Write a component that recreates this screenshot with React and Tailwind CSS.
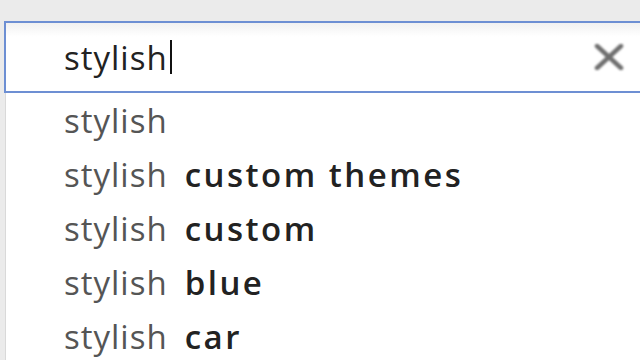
import React from "react";

const suggestions = [
  { base: "stylish", extra: "" },
  { base: "stylish", extra: "custom themes" },
  { base: "stylish", extra: "custom" },
  { base: "stylish", extra: "blue" },
  { base: "stylish", extra: "car" },
];

const App = () => {
  return (
    <div className="w-[640px] h-[360px] overflow-hidden bg-[#ebebeb] font-['Open_Sans',sans-serif]">
      <div className="h-[21px]" />

      {/* omnibox input */}
      <div className="ml-[4px] w-[660px] h-[72px] border-2 border-[#6d8fd3] bg-white bg-gradient-to-b from-[#f1f1f1] to-white to-[20%] flex items-center">
        <div className="pl-[58px] flex items-center text-[33px] tracking-[1px] text-[#222] leading-none">
          <span>stylish</span>
          <span className="ml-[2px] w-[2px] h-[34px] bg-[#111]" />
        </div>
        <div className="ml-auto mr-[38px] flex items-center">
          <svg width="30" height="26" viewBox="0 0 30 26" className="blur-[0.8px]">
            <path d="M3 2 L27 24 M27 2 L3 24" stroke="#6e6e6e" strokeWidth="4.5" strokeLinecap="round" />
          </svg>
        </div>
      </div>

      {/* suggestion dropdown */}
      <div className="h-[270px] ml-[5px] bg-white border-l border-[#d9d9d9] flex flex-col">
        {suggestions.map((s, i) => (
          <div key={i} className="h-[54px] shrink-0 pl-[58px] flex items-center text-[33px] leading-none whitespace-nowrap">
            <span className="text-[#555] tracking-[1px]">{s.base}</span>
            {s.extra && (
              <span className="ml-[17px] font-semibold tracking-[2.5px] text-[#222]">{s.extra}</span>
            )}
          </div>
        ))}
      </div>
    </div>
  );
};

export default App;
